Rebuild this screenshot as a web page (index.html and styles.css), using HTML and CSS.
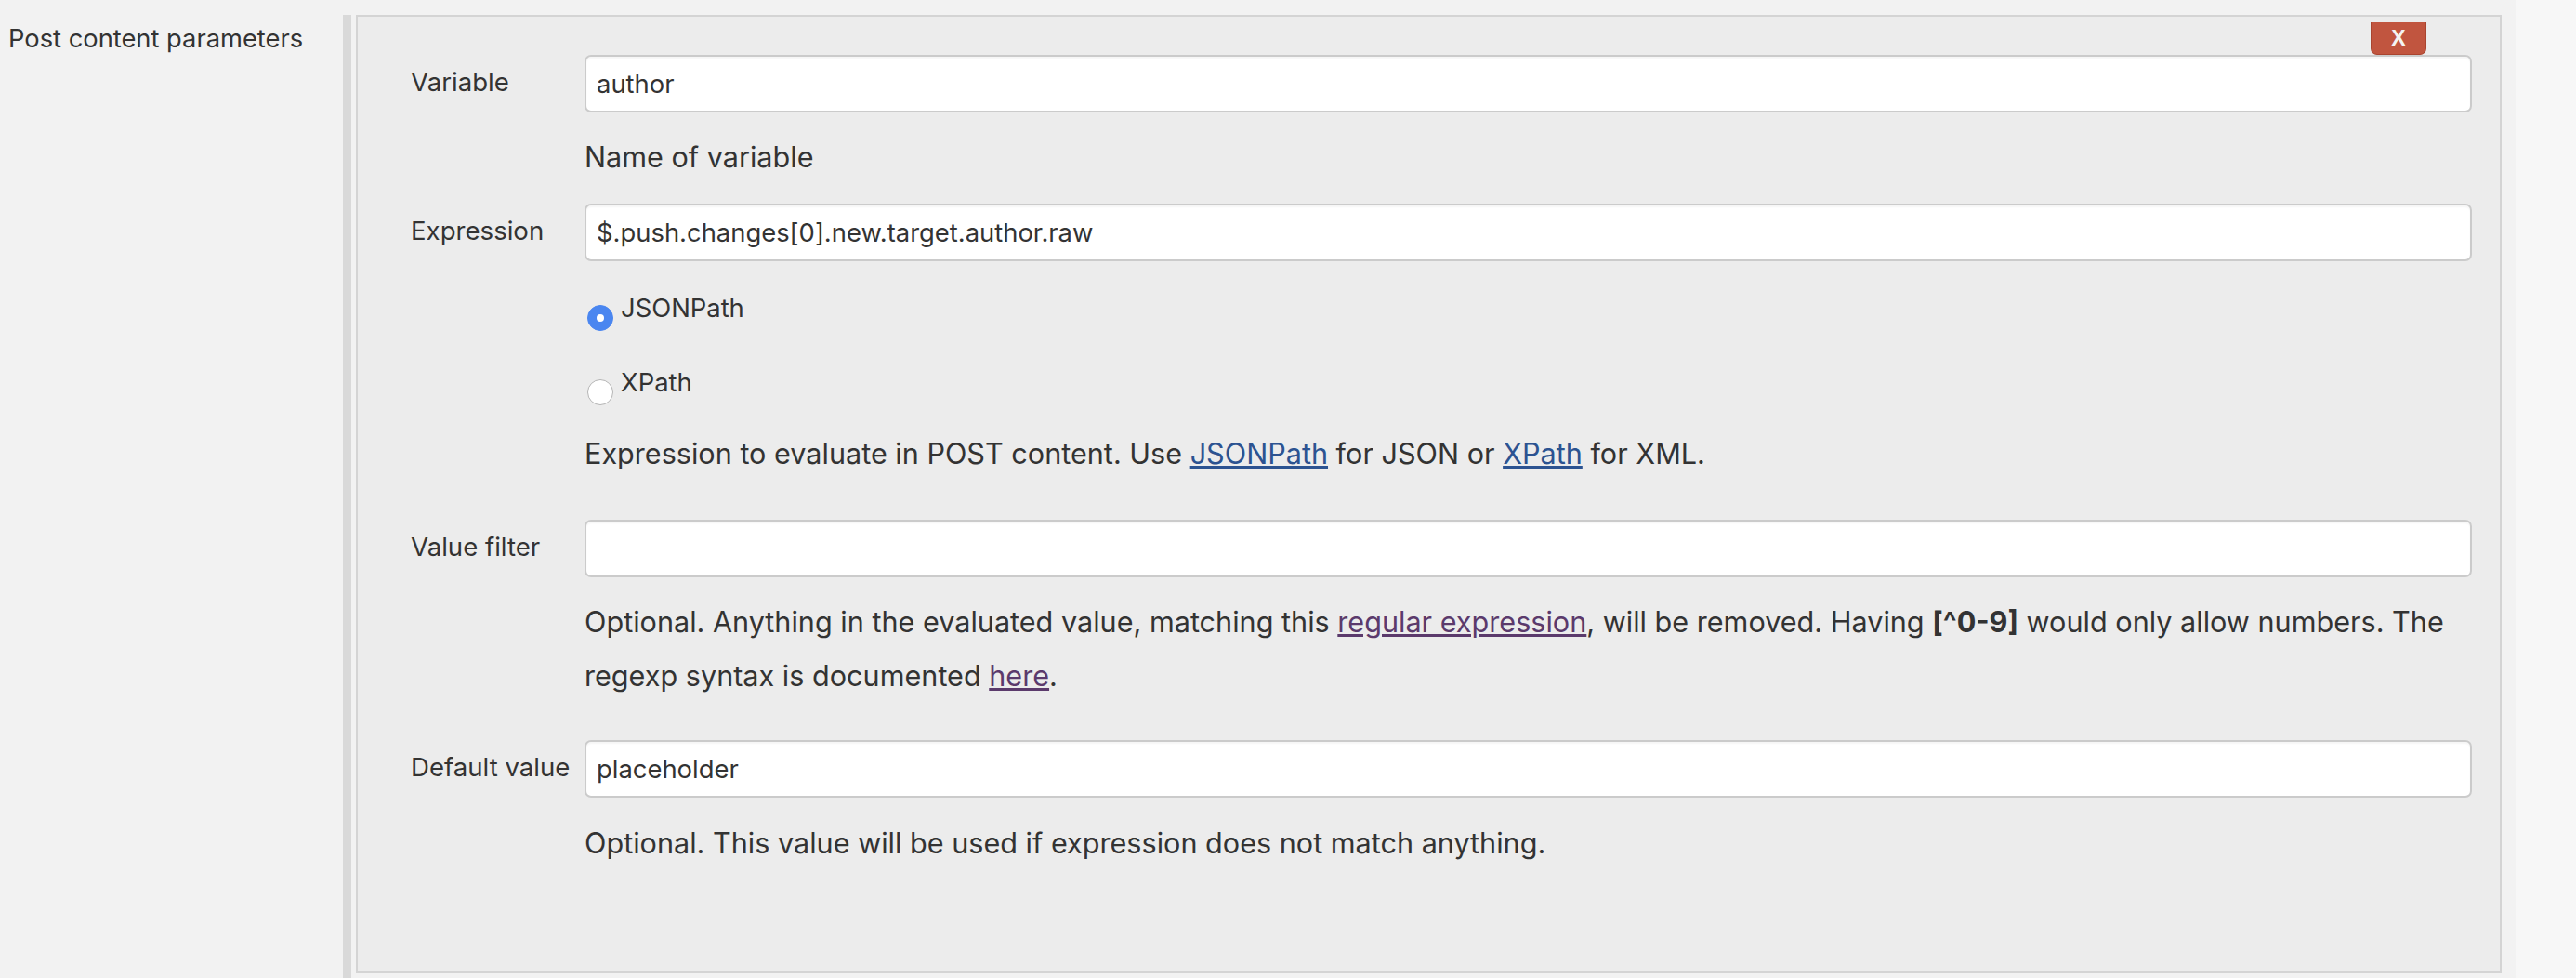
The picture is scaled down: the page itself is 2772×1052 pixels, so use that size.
FILE: index.html
```html
<!DOCTYPE html>
<html lang="en">
<head>
<meta charset="utf-8">
<title>Post content parameters</title>
<link rel="stylesheet" href="styles.css">
</head>
<body>
<div class="page">
  <div class="section-label">Post content parameters</div>
  <div class="bar"></div>
  <div class="panel">
    <button class="delete">X</button>
    <div class="row row-variable">
      <div class="label">Variable</div>
      <div class="field">
        <input class="text" type="text" value="author">
        <div class="help help-1">Name of variable</div>
      </div>
    </div>
    <div class="row row-expression">
      <div class="label">Expression</div>
      <div class="field">
        <input class="text" type="text" value="$.push.changes[0].new.target.author.raw">
        <div class="radios">
          <label class="radio"><span class="dot checked"></span><span>JSONPath</span></label>
          <label class="radio"><span class="dot"></span><span>XPath</span></label>
        </div>
        <div class="help help-2">Expression to evaluate in POST content. Use <a class="link" href="#">JSONPath</a> for JSON or <a class="link" href="#">XPath</a> for XML.</div>
      </div>
    </div>
    <div class="row row-filter">
      <div class="label">Value filter</div>
      <div class="field">
        <input class="text" type="text" value="">
        <div class="help help-3">Optional. Anything in the evaluated value, matching this <a class="visited" href="#">regular expression</a>, will be removed. Having <b>[^0-9]</b> would only allow numbers. The regexp syntax is documented <a class="visited" href="#">here</a>.</div>
      </div>
    </div>
    <div class="row row-default">
      <div class="label">Default value</div>
      <div class="field">
        <input class="text" type="text" value="placeholder">
        <div class="help help-4">Optional. This value will be used if expression does not match anything.</div>
      </div>
    </div>
  </div>
  <div class="gutter"></div>
</div>
</body>
</html>
```
FILE: styles.css
```css
html, body {
  margin: 0;
  padding: 0;
  background: #f2f2f2;
}
body {
  font-family: Inter, "Noto Sans", "Liberation Sans", sans-serif;
  color: #333333;
  height: 1052px;
  overflow: hidden;
}
.page {
  display: flex;
  align-items: stretch;
  height: 1052px;
}
.section-label {
  box-sizing: border-box;
  flex: 0 0 369px;
  width: 369px;
  padding-left: 9px;
  padding-top: 22px;
  font-size: 27.3px;
  line-height: 40px;
  white-space: nowrap;
}
.bar {
  flex: 0 0 9px;
  width: 9px;
  margin-top: 16px;
  background: #d9d9d9;
  margin-right: 5px;
}
.panel {
  box-sizing: border-box;
  position: relative;
  flex: 0 0 2309px;
  width: 2309px;
  margin-top: 16px;
  align-self: flex-start;
  background: #ececec;
  border: 2px solid #d4d4d4;
  padding: 41px 30px 109px 57px;
}
.gutter {
  flex: 1 1 auto;
  margin-left: 15px;
  background: #f7f7f7;
}
.delete {
  position: absolute;
  top: 6px;
  right: 79px;
  width: 60px;
  height: 35px;
  padding: 0;
  background: #c1553f;
  border: 1px solid #a9442f;
  border-top: none;
  border-radius: 0 0 7px 7px;
  color: #f4f4f4;
  font-family: "Liberation Sans", Arial, sans-serif;
  font-weight: bold;
  font-size: 23px;
  line-height: 35px;
  z-index: 2;
}
.row {
  display: grid;
  grid-template-columns: 187px 1fr;
}
.label {
  font-size: 27.6px;
  line-height: 40px;
  padding-top: 9px;
  white-space: nowrap;
}
.field {
  display: flex;
  flex-direction: column;
  align-items: flex-start;
  min-width: 0;
}
.text {
  box-sizing: border-box;
  width: 100%;
  height: 62px;
  margin: 0;
  border: 2px solid #cbcbcb;
  border-radius: 7px;
  background: #ffffff;
  box-shadow: inset 0 2px 2px rgba(0, 0, 0, 0.04);
  padding: 0 11px;
  font-family: Inter, "Noto Sans", "Liberation Sans", sans-serif;
  font-size: 27.4px;
  color: #333333;
  outline: none;
}
.help {
  font-size: 30.6px;
  line-height: 58px;
}
.help-1 { margin-top: 19px; }
.help-2 { margin-top: 23px; }
.help-3 { margin-top: 19px; }
.help-4 { margin-top: 20px; }
.row-expression { margin-top: 21px; }
.row-filter { margin-top: 42px; }
.row-default { margin-top: 40px; }
.radios {
  margin-top: 30px;
  display: flex;
  flex-direction: column;
  gap: 35px;
}
.radio {
  display: flex;
  align-items: flex-start;
  font-size: 27.4px;
  line-height: 40px;
}
.dot {
  box-sizing: border-box;
  width: 28px;
  height: 28px;
  margin-top: 17px;
  margin-left: 3px;
  margin-right: 8px;
  border-radius: 50%;
  background: #ffffff;
  border: 1px solid #b5b5b5;
  position: relative;
}
.dot.checked {
  background: #4a86f0;
  border-color: #4a86f0;
}
.dot.checked::after {
  content: "";
  position: absolute;
  left: 9px;
  top: 9px;
  width: 8px;
  height: 8px;
  border-radius: 50%;
  background: #ffffff;
}
.link {
  color: #2c5391;
  text-decoration: underline;
}
.visited {
  color: #5b3a6c;
  text-decoration: underline;
}
b {
  font-weight: bold;
}
```
